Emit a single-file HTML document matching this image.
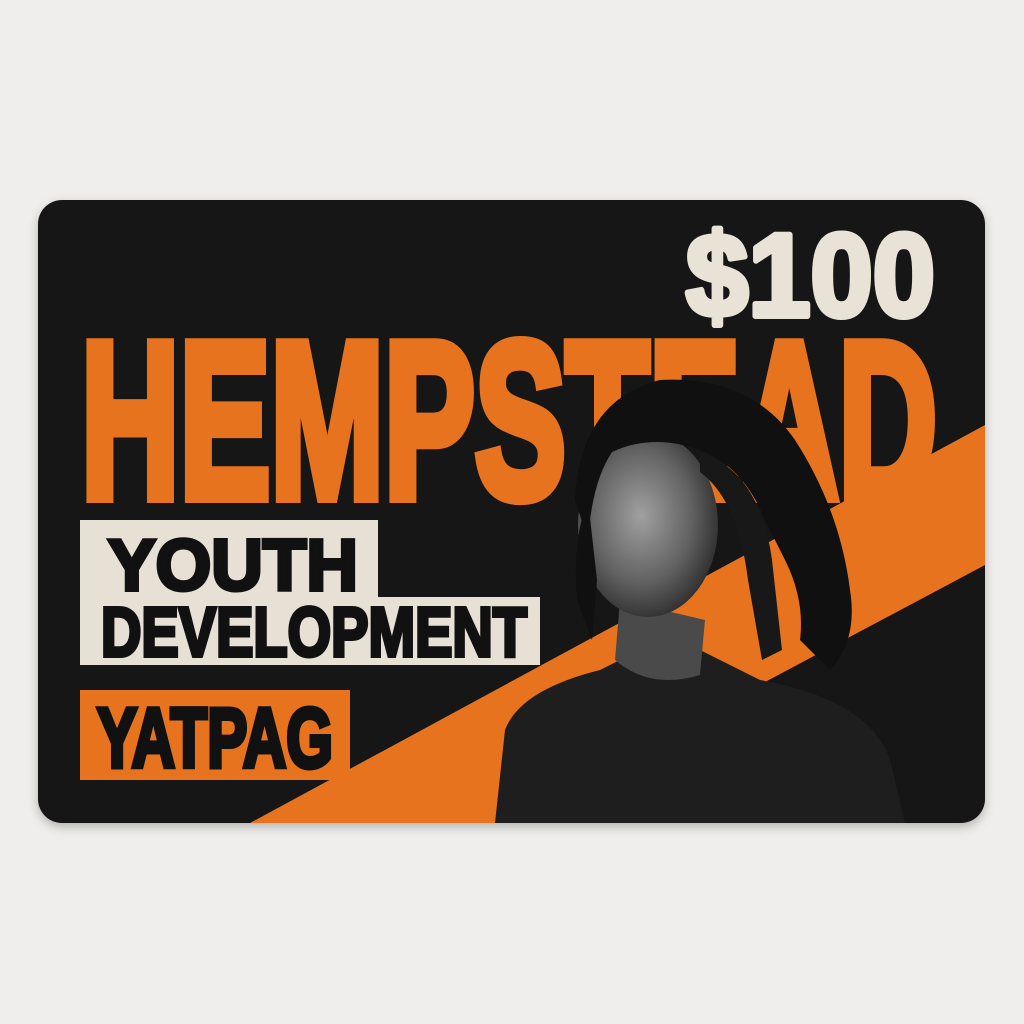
<!DOCTYPE html>
<html><head><style>
html,body{margin:0;padding:0;background:#efeeec;width:1024px;height:1024px;overflow:hidden}
svg{display:block}
</style></head><body>
<svg width="1024" height="1024" viewBox="0 0 1024 1024">
<defs>
<filter id="sh" x="-5%" y="-5%" width="110%" height="115%"><feDropShadow dx="0" dy="4" stdDeviation="5" flood-opacity="0.25"/></filter>
<clipPath id="cc"><rect x="38" y="200" width="947" height="623" rx="24"/></clipPath>
<radialGradient id="face" cx="0.45" cy="0.45" r="0.6"><stop offset="0" stop-color="#a0a0a0"/><stop offset="0.6" stop-color="#626262"/><stop offset="1" stop-color="#2a2a2a"/></radialGradient>
</defs>
<rect width="1024" height="1024" fill="#efeeec"/>
<rect x="38" y="200" width="947" height="623" rx="24" fill="#141414" filter="url(#sh)"/>
<g clip-path="url(#cc)">
<polygon points="250,823 985,425 985,565 500,823" fill="#e8731f"/>
<text x="686" y="316" font-family="Liberation Sans Narrow, Liberation Sans, sans-serif" font-weight="bold" font-size="118" fill="#e8e3d6" stroke="#e8e3d6" stroke-width="6" stroke-linejoin="round" textLength="249" lengthAdjust="spacingAndGlyphs">$100</text>
<text x="81" y="497" font-family="Liberation Sans Narrow, Liberation Sans, sans-serif" font-weight="bold" font-size="222" fill="#e8731f" stroke="#e8731f" stroke-width="12" stroke-linejoin="miter" textLength="856" lengthAdjust="spacingAndGlyphs">HEMPSTEAD</text>
<!-- child -->
<path d="M495,823 L505,730 Q520,690 600,670 L640,650 L700,650 L760,680 Q870,700 890,760 L905,823 Z" fill="#1e1e1e"/>
<path d="M620,600 L615,660 Q650,690 700,675 L705,620 Z" fill="#4a4a4a"/>
<ellipse cx="648" cy="525" rx="70" ry="92" fill="url(#face)"/>
<path d="M575,500 Q580,400 660,380 Q750,375 795,440 Q840,510 850,590 Q858,640 830,670 L800,640 Q805,600 785,560 L765,520 Q745,470 705,452 Q655,432 612,452 Q592,482 588,540 Z" fill="#101010"/>
<path d="M700,452 Q760,472 772,560 L782,650 L762,660 L748,580 Q738,500 700,472 Z" fill="#181818"/>
<path d="M588,500 Q572,540 577,600 L592,640 L597,580 Z" fill="#101010"/>
<!-- boxes -->
<path d="M80,520 H378 V597 H540 V665 H80 Z" fill="#e6e1d4"/>
<text x="108" y="590" font-family="Liberation Sans Narrow, Liberation Sans, sans-serif" font-weight="bold" font-size="72" fill="#111" stroke="#111" stroke-width="4" textLength="250" lengthAdjust="spacingAndGlyphs">YOUTH</text>
<text x="101" y="656" font-family="Liberation Sans Narrow, Liberation Sans, sans-serif" font-weight="bold" font-size="70" fill="#111" stroke="#111" stroke-width="4" textLength="426" lengthAdjust="spacingAndGlyphs">DEVELOPMENT</text>
<rect x="80" y="690" width="270" height="90" fill="#e8731f"/>
<text x="97" y="767" font-family="Liberation Sans Narrow, Liberation Sans, sans-serif" font-weight="bold" font-size="84" fill="#111" stroke="#111" stroke-width="5" textLength="236" lengthAdjust="spacingAndGlyphs">YATPAG</text>
</g>
</svg>
</body></html>
